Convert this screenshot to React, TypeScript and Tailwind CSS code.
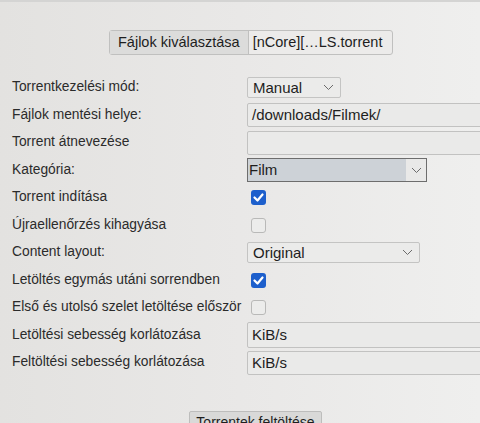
import React from "react";

const font = { fontFamily: '"Liberation Sans", Arial, sans-serif' };

function Chevron() {
  return (
    <svg width="11" height="7" viewBox="0 0 11 7" className="shrink-0">
      <path d="M1 1l4.5 4.5L10 1" fill="none" stroke="#6b6b6b" strokeWidth="1" />
    </svg>
  );
}

function Select({ value, width, focused }: { value: string; width: string; focused?: boolean }) {
  if (focused) {
    return (
      <div className={`flex h-[24px] ${width} shrink-0 items-center border border-[#6d6d6d] bg-[#e9e9e8]`}>
        <div className="flex h-full flex-1 items-center bg-[#cdd2d7] pl-[1px] text-[15px] text-[#1e1e1e]">{value}</div>
        <div className="flex w-[20px] justify-center">
          <Chevron />
        </div>
      </div>
    );
  }
  return (
    <div className={`flex h-[21px] ${width} shrink-0 items-center justify-between rounded-[2px] border border-[#c4c4c3] bg-[#ebebea] pl-[5px] pr-[6px] text-[15px] text-[#1e1e1e]`}>
      <span>{value}</span>
      <Chevron />
    </div>
  );
}

function Input({ value, h = "h-[24px]" }: { value?: string; h?: string }) {
  return (
    <div className={`flex ${h} w-[260px] shrink-0 items-center rounded-[2px] border border-[#c2c2c1] bg-[#eaeae9] pl-[4px] text-[15px] text-[#1e1e1e]`}>
      {value}
    </div>
  );
}

function Check({ on }: { on?: boolean }) {
  if (on) {
    return (
      <div className="ml-[4px] flex h-[15px] w-[15px] shrink-0 items-center justify-center rounded-[3px] bg-[#1d5fcc]">
        <svg width="11" height="9" viewBox="0 0 11 9">
          <path d="M1.5 4.5l3 3L9.5 1.5" fill="none" stroke="#fff" strokeWidth="2.2" strokeLinecap="round" strokeLinejoin="round" />
        </svg>
      </div>
    );
  }
  return <div className="ml-[4px] h-[15px] w-[15px] shrink-0 rounded-[3px] border border-[#b9b9b8] bg-[#ececeb]" />;
}

const rows: { label: string; field: React.ReactNode }[] = [
  { label: "Torrentkezelési mód:", field: <Select value="Manual" width="w-[94px]" /> },
  { label: "Fájlok mentési helye:", field: <Input value="/downloads/Filmek/" /> },
  { label: "Torrent átnevezése", field: <Input /> },
  { label: "Kategória:", field: <Select value="Film" width="w-[180px]" focused /> },
  { label: "Torrent indítása", field: <Check on /> },
  { label: "Újraellenőrzés kihagyása", field: <Check /> },
  { label: "Content layout:", field: <Select value="Original" width="w-[173px]" /> },
  { label: "Letöltés egymás utáni sorrendben", field: <Check on /> },
  { label: "Első és utolsó szelet letöltése először", field: <Check /> },
  { label: "Letöltési sebesség korlátozása", field: <Input value="KiB/s" h="h-[26px]" /> },
  { label: "Feltöltési sebesség korlátozása", field: <Input value="KiB/s" /> },
];

export default function App() {
  return (
    <div
      style={font}
      className="relative h-[423px] w-[480px] overflow-hidden border-t-2 border-[#d4d4d3] bg-gradient-to-r from-[#e3e2e0] via-[#e9e8e7] to-[#efefee] text-[#2b2b2b]"
    >
      <div className="ml-[109px] mt-[28px] flex h-[25px] w-[284px] items-stretch rounded-[3px] border border-[#c0c0bf] bg-[#ecebea] text-[14.5px]">
        <div className="flex items-center border-r border-[#c0c0bf] bg-[#dcdcdb] px-[8px] text-[#1e1e1e]">Fájlok kiválasztása</div>
        <div className="flex items-center pl-[4px] text-[#1e1e1e]">[nCore][…LS.torrent</div>
      </div>

      <div className="mt-[19px] flex flex-col">
        {rows.map((r) => (
          <div key={r.label} className="flex h-[27.5px] items-center">
            <div className="w-[247px] shrink-0 whitespace-nowrap pl-[12px] text-[13.8px]">{r.label}</div>
            {r.field}
          </div>
        ))}
      </div>

      <div className="ml-[189px] mt-[34px] flex h-[24px] w-[133px] items-center justify-center rounded-[2px] border border-[#bdbdbc] bg-[#d9d9d8] text-[14px] text-[#1e1e1e]">
        Torrentek feltöltése
      </div>
    </div>
  );
}
